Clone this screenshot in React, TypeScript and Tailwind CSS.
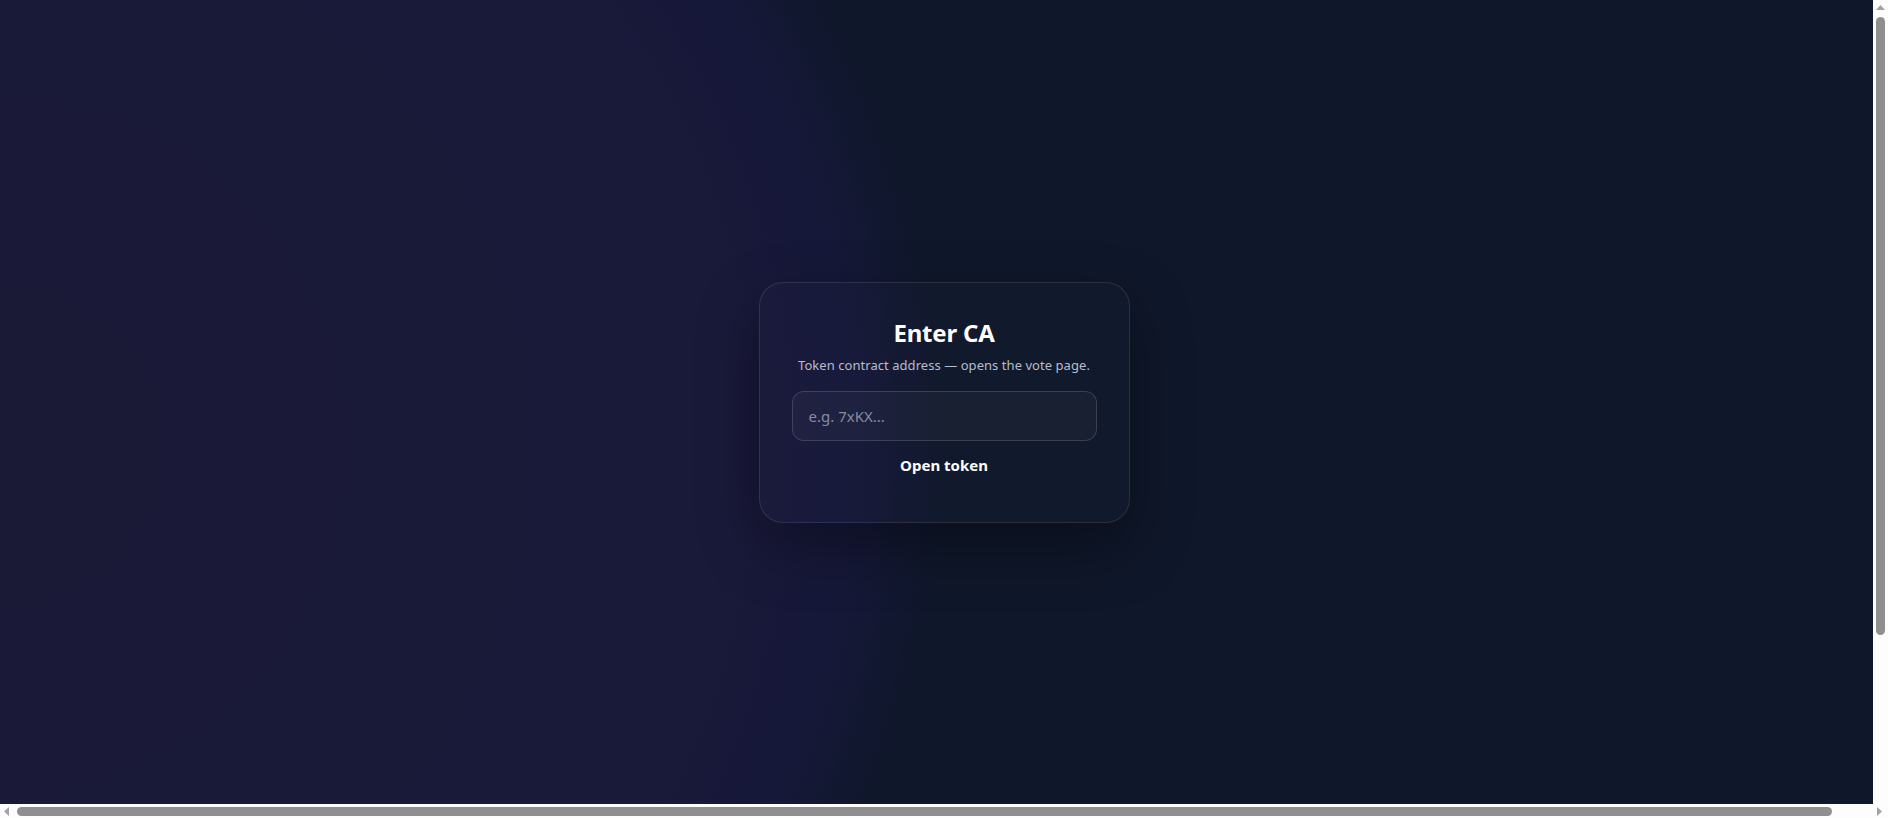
import { useState } from "react"

function ArrowUp() {
  return (
    <svg width="9" height="5" viewBox="0 0 9 5" className="fill-[#a3a3a3]">
      <path d="M4.5 0L9 5H0z" />
    </svg>
  )
}

function ArrowSide({ dir }: { dir: "left" | "right" }) {
  return (
    <svg width="5" height="9" viewBox="0 0 5 9" className="fill-[#a3a3a3]">
      {dir === "left" ? <path d="M0 4.5L5 0v9z" /> : <path d="M5 4.5L0 0v9z" />}
    </svg>
  )
}

export default function App() {
  const [ca, setCa] = useState("")

  return (
    <div className="grid h-screen w-screen grid-cols-[1fr_15px] grid-rows-[1fr_14px] overflow-hidden font-['Noto_Sans','Open_Sans',sans-serif]">
      {/* page */}
      <main className="flex items-center justify-center bg-[#0f172a] bg-[radial-gradient(circle_950px_at_0px_447px,#1a1936_0%,#19193a_78%,#161839_89%,#0f172a_100%)] pl-[15px] text-white">
        <div className="flex w-[371px] flex-col items-center rounded-3xl border border-white/10 bg-white/[0.012] px-8 pt-[34px] pb-[35px] shadow-[0_24px_60px_rgba(0,0,0,0.35)]">
          <h1 className="text-[24px] leading-8 font-bold tracking-[-0.2px]">Enter CA</h1>
          <p className="mt-1.5 text-[13px] leading-5 tracking-[0.05px] text-[#b8bccb]">
            Token contract address — opens the vote page.
          </p>
          <input
            value={ca}
            onChange={(e) => setCa(e.target.value)}
            placeholder="e.g. 7xKX..."
            className="mt-4 h-[50px] w-full rounded-xl border border-white/15 bg-white/[0.03] px-4 text-[15px] text-white outline-none placeholder:text-[#868b9b]"
          />
          <button className="mt-0.5 py-3 text-[15px] leading-5 font-bold text-white">
            Open token
          </button>
        </div>
      </main>

      {/* vertical scrollbar */}
      <div className="flex flex-col items-center bg-[#fdfdfd] pt-[5px]">
        <ArrowUp />
        <div className="mt-[7px] h-[618px] w-[9px] rounded-full bg-[#8f8f8f]" />
      </div>

      {/* horizontal scrollbar */}
      <div className="col-span-2 flex items-center bg-[#fdfdfd] pl-[4px]">
        <ArrowSide dir="left" />
        <div className="ml-[8px] h-[9px] w-[1815px] rounded-full bg-[#8f8f8f]" />
        <div className="ml-auto pr-[6px]">
          <ArrowSide dir="right" />
        </div>
      </div>
    </div>
  )
}
